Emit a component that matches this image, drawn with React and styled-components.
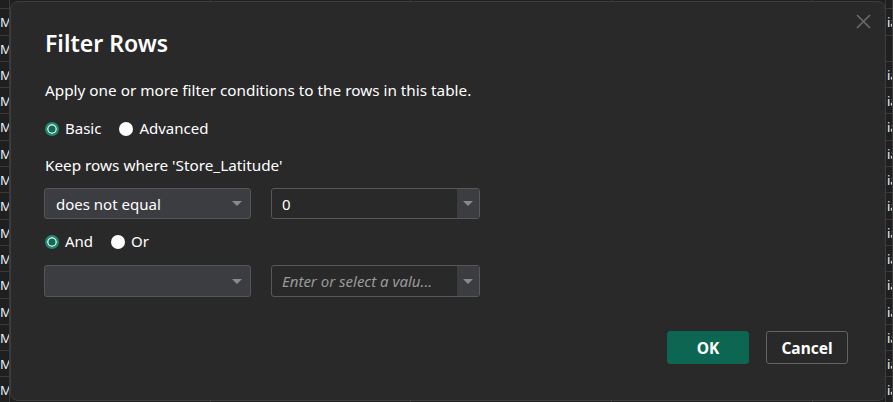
import React, { useState } from 'react';
import styled, { createGlobalStyle } from 'styled-components';

const GlobalStyle = createGlobalStyle`
  html, body {
    margin: 0;
    padding: 0;
    background: #1f1f1f;
    overflow: hidden;
  }
  * {
    box-sizing: border-box;
  }
`;

const Page = styled.div`
  position: relative;
  width: 893px;
  height: 402px;
  overflow: hidden;
  font-family: 'Noto Sans', 'Open Sans', sans-serif;
  color: #ffffff;
`;

const Grid = styled.div`
  display: flex;
  flex-direction: column;
  margin-top: -17px;
`;

const GridRow = styled.div`
  display: grid;
  grid-template-columns: 10px 201px 200px 201px 201px 73px 1fr;
  height: 26.3px;
  border-bottom: 1px solid #3a3a3a;
`;

const Cell = styled.div`
  border-right: 1px solid #3a3a3a;
  font-size: 13px;
  line-height: 26px;
  overflow: hidden;
  white-space: nowrap;
  color: #f2f2f2;
  text-align: ${(p) => (p.$right ? 'right' : 'left')};
  padding-left: ${(p) => (p.$right ? '0' : '1px')};
`;

const Dialog = styled.div`
  position: absolute;
  left: 10px;
  top: 1px;
  width: 876px;
  height: 400px;
  background: #292929;
  border: 1px solid #3d3d3d;
  border-radius: 8px;
  padding: 25px 34px 0 33px;
  display: flex;
  flex-direction: column;
`;

const CloseButton = styled.button`
  position: absolute;
  top: 9px;
  right: 12px;
  width: 20px;
  height: 20px;
  padding: 0;
  border: none;
  background: transparent;
  display: flex;
  align-items: center;
  justify-content: center;
  cursor: pointer;
`;

const Title = styled.h1`
  margin: 0 0 0 1px;
  font-size: 23px;
  font-weight: 600;
  line-height: 32px;
`;

const Text = styled.p`
  margin: ${(p) => p.$margin || '0'};
  padding-left: 1px;
  font-size: 15.3px;
  line-height: 20px;
`;

const RadioGroup = styled.div`
  display: flex;
  align-items: center;
  gap: 18px;
  margin: ${(p) => p.$margin || '0'};
  padding-left: 1px;
  height: 20px;
`;

const RadioLabel = styled.label`
  display: flex;
  align-items: center;
  gap: 6px;
  font-size: 15px;
  cursor: pointer;
`;

const RadioDot = styled.span`
  width: 14px;
  height: 14px;
  border-radius: 50%;
  flex-shrink: 0;
  margin-top: 1px;
  background: ${(p) => (p.$checked ? '#0f6b58' : '#ffffff')};
  border: ${(p) => (p.$checked ? '2px solid #1c8c74' : 'none')};
  box-shadow: ${(p) => (p.$checked ? 'inset 0 0 0 1.5px #d8e8e4' : 'none')};
`;

const FieldRow = styled.div`
  display: flex;
  gap: 20px;
  margin: ${(p) => p.$margin || '0'};
`;

const Select = styled.div`
  width: 207px;
  height: ${(p) => p.$height || '31px'};
  background: #3c3d41;
  border: 1px solid #55565a;
  border-radius: 3px;
  display: flex;
  align-items: center;
  padding: 0 8px 0 11px;
  font-size: 15px;
`;

const SelectText = styled.span`
  flex: 1;
`;

const Combo = styled.div`
  width: 209px;
  height: ${(p) => p.$height || '31px'};
  background: #292929;
  border: 1px solid #58585a;
  border-radius: 3px;
  display: flex;
  overflow: hidden;
`;

const ComboInput = styled.div`
  flex: 1;
  display: flex;
  align-items: center;
  padding-left: 10px;
  font-size: 15px;
  color: ${(p) => (p.$placeholder ? '#9a9a9a' : '#ffffff')};
  font-style: ${(p) => (p.$placeholder ? 'italic' : 'normal')};
  white-space: nowrap;
  overflow: hidden;
`;

const ComboButton = styled.div`
  width: 22px;
  background: #3c3d41;
  display: flex;
  align-items: center;
  justify-content: center;
`;

const Caret = styled.span`
  width: 0;
  height: 0;
  border-left: 5px solid transparent;
  border-right: 5px solid transparent;
  border-top: 5px solid #8a8a8e;
`;

const Footer = styled.div`
  display: flex;
  justify-content: flex-end;
  gap: 17px;
  margin-top: auto;
  margin-bottom: 36px;
  padding-right: 3px;
`;

const Button = styled.button`
  width: 82px;
  height: 33px;
  border-radius: 3px;
  font-family: inherit;
  font-size: 15.5px;
  font-weight: 700;
  color: #ffffff;
  cursor: pointer;
  background: ${(p) => (p.$primary ? '#0d6652' : 'transparent')};
  border: 1px solid ${(p) => (p.$primary ? '#0d6652' : '#636363')};
`;

const Radio = ({ checked, label, onClick }) => (
  <RadioLabel onClick={onClick}>
    <RadioDot $checked={checked} />
    {label}
  </RadioLabel>
);

const rows = Array.from({ length: 17 });

const App = () => {
  const [mode, setMode] = useState('basic');
  const [logic, setLogic] = useState('and');

  return (
    <>
      <GlobalStyle />
      <Page>
        <Grid>
          {rows.map((_, i) => (
            <GridRow key={i}>
              <Cell $right>{i > 0 ? 'M' : ''}</Cell>
              <Cell />
              <Cell />
              <Cell />
              <Cell />
              <Cell />
              <Cell>{i > 0 && i !== 2 ? 'ia' : ''}</Cell>
            </GridRow>
          ))}
        </Grid>

        <Dialog>
          <CloseButton aria-label="Close">
            <svg width="15" height="15" viewBox="0 0 15 15">
              <path d="M1 1 L14 14 M14 1 L1 14" stroke="#6b6b6b" strokeWidth="1.6" />
            </svg>
          </CloseButton>
          <Title>Filter Rows</Title>
          <Text $margin="21px 0 0 0">Apply one or more filter conditions to the rows in this table.</Text>
          <RadioGroup $margin="18px 0 0 0">
            <Radio checked={mode === 'basic'} label="Basic" onClick={() => setMode('basic')} />
            <Radio checked={mode === 'advanced'} label="Advanced" onClick={() => setMode('advanced')} />
          </RadioGroup>
          <Text $margin="17px 0 0 0">Keep rows where 'Store_Latitude'</Text>
          <FieldRow $margin="13px 0 0 0">
            <Select>
              <SelectText>does not equal</SelectText>
              <Caret />
            </Select>
            <Combo>
              <ComboInput>0</ComboInput>
              <ComboButton>
                <Caret />
              </ComboButton>
            </Combo>
          </FieldRow>
          <RadioGroup $margin="12px 0 0 0">
            <Radio checked={logic === 'and'} label="And" onClick={() => setLogic('and')} />
            <Radio checked={logic === 'or'} label="Or" onClick={() => setLogic('or')} />
          </RadioGroup>
          <FieldRow $margin="14px 0 0 0">
            <Select $height="32px">
              <SelectText />
              <Caret />
            </Select>
            <Combo $height="32px">
              <ComboInput $placeholder>Enter or select a valu...</ComboInput>
              <ComboButton>
                <Caret />
              </ComboButton>
            </Combo>
          </FieldRow>
          <Footer>
            <Button $primary>OK</Button>
            <Button>Cancel</Button>
          </Footer>
        </Dialog>
      </Page>
    </>
  );
};

export default App;
